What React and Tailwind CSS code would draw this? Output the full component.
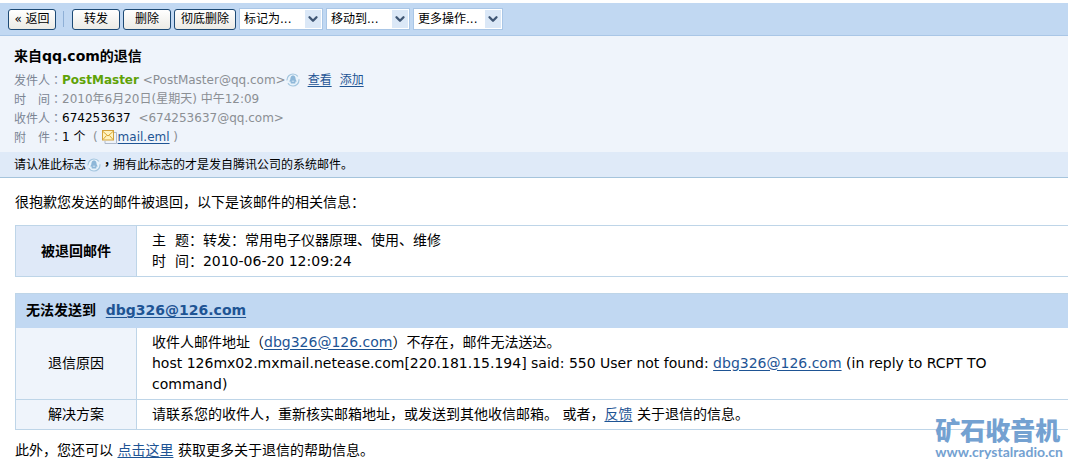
import React from 'react';
import { ChevronDown } from 'lucide-react';

const link = 'text-[#1e5494] underline underline-offset-2';

const ToolButton = ({ children, className = '' }) => (
  <button
    type="button"
    className={`h-[21px] rounded-[3px] border border-[#1d4a75] bg-linear-to-b from-white to-[#ecebe5] text-xs leading-[18px] whitespace-nowrap text-black ${className}`}
  >
    {children}
  </button>
);

const ToolSelect = ({ label, className }) => (
  <div className={`relative h-[22px] border border-[#a9c6e6] bg-white ${className}`}>
    <select aria-label={label} className="block h-full w-full appearance-none pl-1 pr-4 text-xs text-black outline-none">
      <option>{label}</option>
    </select>
    <span className="pointer-events-none absolute inset-y-px right-px flex w-4 items-center justify-center bg-[#dbe8f7]">
      <ChevronDown className="size-[14px] text-[#3f5674]" strokeWidth={4} />
    </span>
  </div>
);

const SystemMark = () => (
  <svg viewBox="0 0 14 14" className="inline-block size-[14px] align-[-3px]" aria-hidden="true">
    <circle cx="7" cy="7" r="6" fill="#e9f3fb" stroke="#a4c6df" strokeWidth="1.2" strokeDasharray="15 3" />
    <path d="M7 2.6C4.7 2.6 4.4 5 4.3 6.5L3.2 8.6h1.3l.3 2h4.4l.3-2h1.3L9.7 6.5C9.6 5 9.3 2.6 7 2.6z" fill="#8eb7d8" />
    <path d="M5.8 8.2h2.4" stroke="#e9f3fb" strokeWidth=".8" />
  </svg>
);

const MailIcon = () => (
  <svg viewBox="0 0 15 15" className="mr-px inline-block size-[15px] align-[-3px]" aria-hidden="true">
    <path d="M4 3.5h10.5v11H3V12" fill="#eef3fa" stroke="#aeb9ca" />
    <rect x=".5" y="1.5" width="11" height="9.5" fill="#fff3bf" stroke="#d2a23c" />
    <path d="M1 2.5l5 4.5 5-4.5M1 10.5l3.5-4M11 10.5l-3.5-4" fill="none" stroke="#d9a632" />
  </svg>
);

// header labels use a centred full-width colon
const Field = ({ label, children }) => (
  <div className="flex h-[19px]">
    <dt className="shrink-0 whitespace-pre text-[#7b8594]">
      {label}
      <span className="font-['Noto_Sans_CJK_TC',sans-serif]">：</span>
    </dt>
    <dd className="text-[#8b8f94]">{children}</dd>
  </div>
);

const App = () => {
  return (
    <div className="relative min-h-screen overflow-hidden bg-white pt-[3px] font-['DejaVu_Sans','Noto_Sans_CJK_SC',sans-serif] text-black">
      <div className="flex h-[33px] items-center border-b border-[#a9c6e6] bg-[#c1d8f2] pl-2">
        <ToolButton className="w-12">« 返回</ToolButton>
        <span className="mr-2 ml-[7px] h-4 w-px bg-[#8fb0d6]" />
        <div className="flex gap-[3px]">
          <ToolButton className="w-12">转发</ToolButton>
          <ToolButton className="w-12">删除</ToolButton>
          <ToolButton className="w-[62px]">彻底删除</ToolButton>
        </div>
        <div className="ml-[3px] flex gap-[3px]">
          <ToolSelect label="标记为..." className="w-[84px]" />
          <ToolSelect label="移动到..." className="w-[84px]" />
          <ToolSelect label="更多操作..." className="w-[90px]" />
        </div>
      </div>

      <header className="bg-[#eff4fb] pt-[10px] text-xs leading-[20px]">
        <h1 className="mb-1 pl-[14px] text-sm leading-5 font-bold">来自qq.com的退信</h1>
        <dl className="pb-[6px] pl-[14px]">
          <Field label="发件人">
            <b className="text-[#5fa207]">PostMaster</b> &lt;PostMaster@qq.com&gt;
            <SystemMark />
            <a href="#view" className={`mx-2 ${link}`}>查看</a>
            <a href="#add" className={link}>添加</a>
          </Field>
          <Field label="时　间">2010年6月20日(星期天) 中午12:09</Field>
          <Field label="收件人">
            <span className="text-black">674253637</span>&nbsp; &lt;674253637@qq.com&gt;
          </Field>
          <Field label="附　件">
            <span className="text-black">1 个</span>&nbsp; ( <MailIcon />
            <a href="#attachment" className={link}>mail.eml</a> )
          </Field>
        </dl>
        <p className="h-[26px] border-b border-[#a5c4dc] bg-[#dfeaf8] pl-[14px] leading-[24px]">
          <span className="mr-px">请认准此标志</span>
          <SystemMark />
          <span className="font-['Noto_Sans_CJK_TC',sans-serif] font-bold">，</span>
          拥有此标志的才是发自腾讯公司的系统邮件。
        </p>
      </header>

      <main className="pt-[14px] pl-[15px] text-sm leading-[21px]">
        <p>很抱歉您发送的邮件被退回，以下是该邮件的相关信息：</p>

        <table className="mt-[12px] w-full border-collapse border border-r-0 border-[#bed5e8]">
          <tbody>
            <tr>
              <th className="w-[121px] border-r border-[#bed5e8] bg-[#dfe9f8] font-bold">被退回邮件</th>
              <td className="py-1 pr-4 pl-[15px]">
                主&nbsp; 题：转发：常用电子仪器原理、使用、维修
                <br />
                时&nbsp; 间：2010-06-20 12:09:24
              </td>
            </tr>
          </tbody>
        </table>

        <table className="mt-4 w-full border-collapse border border-r-0 border-[#bed5e8]">
          <thead>
            <tr>
              <th colSpan={2} className="h-[34px] bg-[#c1d8f2] pl-[10px] text-left">
                无法发送到&nbsp; <a href="mailto:dbg326@126.com" className={link}>dbg326@126.com</a>
              </th>
            </tr>
          </thead>
          <tbody>
            <tr className="border-b border-[#bed5e8]">
              <th className="w-[121px] border-r border-[#bed5e8] bg-[#eff4fb] font-normal">退信原因</th>
              <td className="py-1 pr-4 pl-[15px]">
                收件人邮件地址（<a href="mailto:dbg326@126.com" className={link}>dbg326@126.com</a>）不存在，邮件无法送达。
                <br />
                host 126mx02.mxmail.netease.com[220.181.15.194] said: 550 User not found:{' '}
                <a href="mailto:dbg326@126.com" className={link}>dbg326@126.com</a> (in reply to RCPT TO command)
              </td>
            </tr>
            <tr>
              <th className="border-r border-[#bed5e8] bg-[#eff4fb] font-normal">解决方案</th>
              <td className="py-1 pr-4 pl-[15px]">
                请联系您的收件人，重新核实邮箱地址，或发送到其他收信邮箱。 或者，<a href="#feedback" className={link}>反馈</a> 关于退信的信息。
              </td>
            </tr>
          </tbody>
        </table>

        <p className="mt-[10px]">
          此外，您还可以 <a href="#help" className={link}>点击这里</a> 获取更多关于退信的帮助信息。
        </p>
      </main>

      <div className="absolute right-[5px] bottom-1 text-[#74a1d1]">
        <div className="text-[25px] leading-[27px] font-black">矿石收音机</div>
        <div className="text-right font-['Lato',sans-serif] text-sm leading-[14px] font-bold">www.crystalradio.cn</div>
      </div>
    </div>
  );
};

export default App;
